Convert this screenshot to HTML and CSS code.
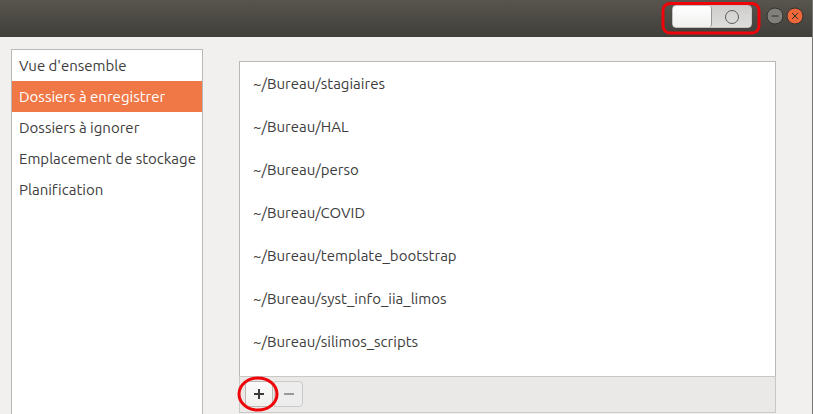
FILE: index.html
```html
<!DOCTYPE html>
<html lang="fr">
<head>
<meta charset="utf-8">
<title>Sauvegardes</title>
<link rel="stylesheet" href="styles.css">
</head>
<body>
<div class="window">
  <header class="titlebar">
    <div class="switch-wrap">
      <input class="switch" type="checkbox" role="switch" aria-label="Sauvegarde automatique">
      <svg class="mark mark-switch" viewBox="0 0 102 34" aria-hidden="true"><rect x="3" y="2.500" width="96" height="29.500" rx="7"/></svg>
    </div>
    <div class="controls">
      <button class="control" type="button" aria-label="Réduire">
        <svg viewBox="0 0 18 18"><circle class="disc-min" cx="9" cy="9" r="8"/><path d="M5.500 9h7"/></svg>
      </button>
      <button class="control" type="button" aria-label="Fermer">
        <svg viewBox="0 0 18 18"><circle class="disc-close" cx="9" cy="9" r="8"/><path d="M6 6l6 6M12 6l-6 6"/></svg>
      </button>
    </div>
  </header>
  <div class="content">
    <nav class="sidebar">
      <a href="#apercu">Vue d'ensemble</a>
      <a href="#enregistrer" class="selected" aria-current="page">Dossiers à enregistrer</a>
      <a href="#ignorer">Dossiers à ignorer</a>
      <a href="#stockage">Emplacement de stockage</a>
      <a href="#planification">Planification</a>
    </nav>
    <main class="panel">
      <ul class="folders">
        <li>~/Bureau/stagiaires</li>
        <li>~/Bureau/HAL</li>
        <li>~/Bureau/perso</li>
        <li>~/Bureau/COVID</li>
        <li>~/Bureau/template_bootstrap</li>
        <li>~/Bureau/syst_info_iia_limos</li>
        <li>~/Bureau/silimos_scripts</li>
      </ul>
      <div class="toolbar">
        <button class="tool" type="button" aria-label="Ajouter"><svg viewBox="0 0 16 16"><path d="M3 8h10M8 3v10"/></svg></button>
        <button class="tool remove" type="button" aria-label="Supprimer" disabled><svg viewBox="0 0 16 16"><path d="M3 8h10"/></svg></button>
        <svg class="mark mark-add" viewBox="0 0 42 36" aria-hidden="true"><ellipse cx="21" cy="18" rx="19" ry="16"/></svg>
      </div>
    </main>
  </div>
</div>
</body>
</html>
```
FILE: styles.css
```css
* { box-sizing: border-box; }

body {
  margin: 0;
  background: #f1f0ef;
  color: #3d3d3d;
  font: 15px/20px Ubuntu, "Noto Sans", sans-serif;
  font-variant-ligatures: none;
}

.window {
  display: flex;
  flex-direction: column;
  height: 100vh;
  overflow: hidden;
  border-right: 1px solid #777673;
}

.titlebar {
  display: flex;
  flex: none;
  align-items: flex-start;
  justify-content: flex-end;
  gap: 14px;
  height: 37px;
  padding: 5px 8px 0 0;
  background: linear-gradient(#58554e, #403e39);
}

.switch-wrap { position: relative; height: 23px; }

.switch {
  appearance: none;
  display: flex;
  align-items: center;
  width: 80px;
  height: 23px;
  margin: 0;
  border: 1px solid #c4c2be;
  border-radius: 4px;
  background: linear-gradient(#cecdcc, #dededd);
}

.switch::before {
  content: "";
  width: 38px;
  height: 21px;
  border-right: 1px solid #999794;
  border-radius: 3px;
  background: linear-gradient(#fff, #f0f0ef);
}

.switch::after {
  content: "";
  width: 12px;
  height: 12px;
  margin: 0 auto;
  border: 1px solid #5d5c5a;
  border-radius: 50%;
}

.controls { display: flex; gap: 2px; padding-top: 2px; }

.control {
  width: 18px;
  height: 18px;
  padding: 0;
  border: 0;
  background: none;
}

.control svg { display: block; stroke: #33322e; fill: none; }
.control .disc-min { fill: #81807a; }
.control .disc-close { fill: #ee673a; }

.mark {
  position: absolute;
  fill: none;
  stroke: #ee0409;
  stroke-width: 3;
  pointer-events: none;
}

.mark-switch { left: -12px; top: -4px; width: 102px; height: 34px; }
.mark-add { left: -3px; top: -1px; width: 42px; height: 36px; }

.content {
  display: flex;
  flex: 1;
  gap: 36px;
  min-height: 0;
  padding: 12px 36px 0 11px;
}

.sidebar {
  flex: none;
  width: 192px;
  border: 1px solid #bab8b5;
  border-bottom: 0;
  background: #fff;
}

.sidebar a {
  display: block;
  padding: 6px 7px 5px;
  color: inherit;
  text-decoration: none;
  white-space: nowrap;
}

.sidebar .selected { background: #f07746; color: #fff; }

.panel {
  display: flex;
  flex: 1;
  flex-direction: column;
  padding: 12px 0 1px;
}

.folders {
  flex: 1;
  margin: 0;
  padding: 0;
  border: 1px solid #bab8b5;
  border-bottom: 0;
  background: #fff;
  list-style: none;
}

.folders li { padding: 12px 13px 11px; }

.toolbar {
  position: relative;
  display: flex;
  flex: none;
  gap: 1px;
  height: 37px;
  padding: 4px 5px;
  border: 1px solid #c9c8c6;
  background: #eae9e8;
}

.tool {
  display: flex;
  align-items: center;
  justify-content: center;
  width: 28px;
  height: 26px;
  padding: 0;
  border: 1px solid #bbb9b6;
  border-radius: 4px 0 0 4px;
  background: linear-gradient(#fbfbfb, #f0f0ef);
}

.tool svg { width: 16px; height: 16px; stroke: #3b3b3b; stroke-width: 2; }

.remove {
  width: 29px;
  border-color: #cccac8;
  border-radius: 0 4px 4px 0;
  background: #eeeded;
}

.remove svg { stroke: #999; }
```
